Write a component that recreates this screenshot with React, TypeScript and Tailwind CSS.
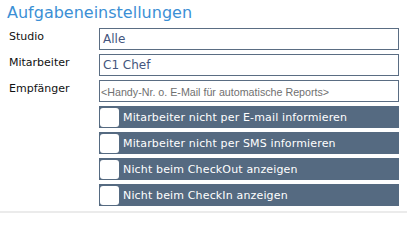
import React from "react"

const fields = [
  { label: "Studio", value: "Alle" },
  { label: "Mitarbeiter", value: "C1 Chef" },
]

const options = [
  "Mitarbeiter nicht per E-mail informieren",
  "Mitarbeiter nicht per SMS informieren",
  "Nicht beim CheckOut anzeigen",
  "Nicht beim CheckIn anzeigen",
]

function OptionBar({ text }: { text: string }) {
  return (
    <label className="col-start-2 flex h-[22px] items-center bg-[#556a81] pl-[1px]">
      <span className="h-[19px] w-[19px] shrink-0 rounded-[3px] bg-white" />
      <span className="pl-[4px] pt-[1px] text-[11px] leading-[13px] tracking-[0.15px] text-white">
        {text}
      </span>
    </label>
  )
}

export default function App() {
  return (
    <div className="box-border h-[213px] w-[407px] border-b-2 border-[#ebebeb] bg-white font-['DejaVu_Sans',sans-serif]">
      <h2 className="pl-[7px] pt-[3px] text-[16px] leading-[20px] font-normal text-[#3b8fd5]">
        Aufgabeneinstellungen
      </h2>

      <div className="grid grid-cols-[90px_300px] gap-y-[4px] pl-[9px] pt-[5px]">
        {fields.map((f) => (
          <React.Fragment key={f.label}>
            <div className="pt-[2px] text-[11px] leading-[14px] text-[#111]">{f.label}</div>
            <div className="flex h-[22px] items-center border border-[#5a6d83] pl-[3px] text-[12px] leading-[14px] text-[#44557d]">
              {f.value}
            </div>
          </React.Fragment>
        ))}

        <div className="pt-[2px] text-[11px] leading-[14px] text-[#111]">Empfänger</div>
        <div className="flex h-[22px] items-center border border-[#5a6d83] pl-[1px] pt-[1px] font-['Liberation_Sans',sans-serif] text-[10.7px] leading-[12px] text-[#707070]">
          &lt;Handy-Nr. o. E-Mail für automatische Reports&gt;
        </div>

        {options.map((o) => (
          <OptionBar key={o} text={o} />
        ))}
      </div>
    </div>
  )
}
